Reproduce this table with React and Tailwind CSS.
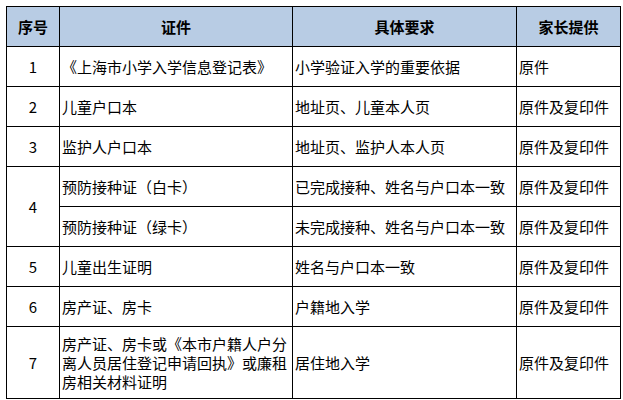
const ROWS = [
  { no: '1', doc: '《上海市小学入学信息登记表》', req: '小学验证入学的重要依据', give: '原件' },
  { no: '2', doc: '儿童户口本', req: '地址页、儿童本人页', give: '原件及复印件' },
  { no: '3', doc: '监护人户口本', req: '地址页、监护人本人页', give: '原件及复印件' },
]

const ROWS2 = [
  { no: '5', doc: '儿童出生证明', req: '姓名与户口本一致', give: '原件及复印件' },
  { no: '6', doc: '房产证、房卡', req: '户籍地入学', give: '原件及复印件' },
]

const cell = 'border border-black px-[2px] align-middle'

export default function App() {
  return (
    <div
      className="w-[623px] h-[400px] bg-white pt-[6px] pl-[6px] text-black"
      style={{ fontFamily: '"Noto Sans CJK SC", "Noto Sans", sans-serif' }}
    >
      <table className="border-collapse table-fixed w-[614px] text-[15px] leading-[19px]">
        <colgroup>
          <col className="w-[53px]" />
          <col className="w-[233px]" />
          <col className="w-[224px]" />
          <col className="w-[104px]" />
        </colgroup>
        <thead>
          <tr className="bg-[#b8cce4] h-[40px]">
            <th className={`${cell} font-bold text-center`}>序号</th>
            <th className={`${cell} font-bold text-center`}>证件</th>
            <th className={`${cell} font-bold text-center`}>具体要求</th>
            <th className={`${cell} font-bold text-center`}>家长提供</th>
          </tr>
        </thead>
        <tbody>
          {ROWS.map(r => (
            <tr key={r.no} className="h-[40px]">
              <td className={`${cell} text-center`}>{r.no}</td>
              <td className={cell}>{r.doc}</td>
              <td className={cell}>{r.req}</td>
              <td className={cell}>{r.give}</td>
            </tr>
          ))}
          <tr className="h-[40px]">
            <td rowSpan={2} className={`${cell} text-center`}>4</td>
            <td className={cell}>预防接种证（白卡）</td>
            <td className={cell}>已完成接种、姓名与户口本一致</td>
            <td className={cell}>原件及复印件</td>
          </tr>
          <tr className="h-[40px]">
            <td className={cell}>预防接种证（绿卡）</td>
            <td className={cell}>未完成接种、姓名与户口本一致</td>
            <td className={cell}>原件及复印件</td>
          </tr>
          {ROWS2.map(r => (
            <tr key={r.no} className="h-[40px]">
              <td className={`${cell} text-center`}>{r.no}</td>
              <td className={cell}>{r.doc}</td>
              <td className={cell}>{r.req}</td>
              <td className={cell}>{r.give}</td>
            </tr>
          ))}
          <tr className="h-[72px]">
            <td className={`${cell} text-center`}>7</td>
            <td className={`${cell} break-all`}>房产证、房卡或《本市户籍人户分离人员居住登记申请回执》或廉租房相关材料证明</td>
            <td className={cell}>居住地入学</td>
            <td className={cell}>原件及复印件</td>
          </tr>
        </tbody>
      </table>
    </div>
  )
}
